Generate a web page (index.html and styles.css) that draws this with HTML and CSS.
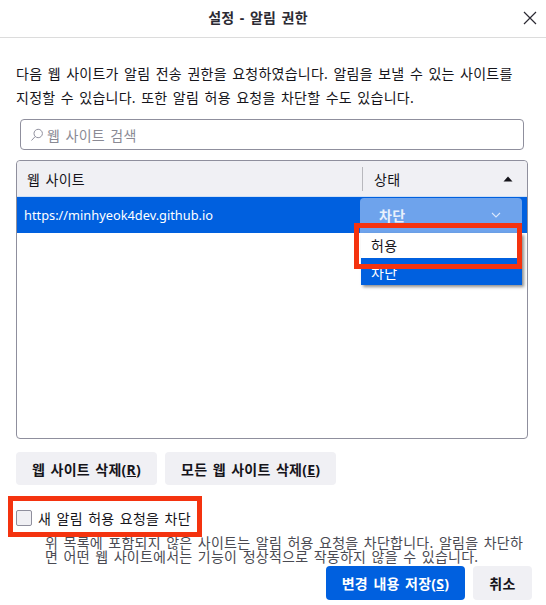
FILE: index.html
```html
<!DOCTYPE html>
<html lang="ko">
  <head>
    <meta charset="UTF-8" />
    <title>설정 - 알림 권한</title>
    <link rel="stylesheet" href="styles.css">
  </head>
  <body>
    <div class="dialog">
      <!-- Title bar -->
      <div class="titlebar">
        <h1>설정 - 알림 권한</h1>
        <svg class="close" width="14" height="14" viewBox="0 0 14 14">
          <path d="M1 1 L13 13 M13 1 L1 13" stroke="#2b2a33" stroke-width="1.2" fill="none" />
        </svg>
      </div>

      <div class="content">
        <p class="intro">다음 웹 사이트가 알림 전송 권한을 요청하였습니다. 알림을 보낼 수 있는 사이트를<br>지정할 수 있습니다. 또한 알림 허용 요청을 차단할 수도 있습니다.</p>

        <div class="search">
          <svg width="14" height="14" viewBox="0 0 14 14">
            <circle cx="8.2" cy="5.5" r="4.2" stroke="#8f8f9d" stroke-width="1" fill="none" />
            <path d="M5.2 8.5 L1.5 12.5" stroke="#8f8f9d" stroke-width="1" fill="none" />
          </svg>
          <span>웹 사이트 검색</span>
        </div>

        <!-- Site list -->
        <div class="list">
          <div class="list-head">
            <div class="col-site">웹 사이트</div>
            <div class="col-status">
              <span>상태</span>
              <svg width="10" height="6" viewBox="0 0 10 6"><path d="M5 0.5 L9.5 5.5 L0.5 5.5 Z" fill="#15141a" /></svg>
            </div>
          </div>
          <div class="list-row">
            <div class="site-url">https://minhyeok4dev.github.io</div>
            <div class="status-select">
              <span>차단</span>
              <svg width="10" height="6" viewBox="0 0 10 6"><path d="M1 1 L5 5 L9 1" stroke="#dbe8fb" stroke-width="1.1" fill="none" /></svg>
            </div>
          </div>
          <div class="status-menu">
            <div class="menu-item">허용</div>
            <div class="menu-item current">차단</div>
          </div>
          <div class="mark mark-menu"></div>
        </div>

        <div class="list-actions">
          <button class="btn">웹 사이트 삭제(<u>R</u>)</button>
          <button class="btn">모든 웹 사이트 삭제(<u>E</u>)</button>
        </div>

        <div class="block-row">
          <label class="check-label"><span class="check"></span>새 알림 허용 요청을 차단</label>
          <div class="mark mark-check"></div>
        </div>
        <p class="desc">위 목록에 포함되지 않은 사이트는 알림 허용 요청을 차단합니다. 알림을 차단하<br>면 어떤 웹 사이트에서는 기능이 정상적으로 작동하지 않을 수 있습니다.</p>

        <div class="footer">
          <button class="btn primary">변경 내용 저장(<u>S</u>)</button>
          <button class="btn cancel">취소</button>
        </div>
      </div>
    </div>
  </body>
</html>
```

FILE: styles.css
```css
:root {
  --blue: #0060df;
  --grey-btn: #f0f0f4;
  --red: #f4330f;
  --ink: #15141a;
}

html,
body {
  margin: 0;
  height: 605px;
  overflow: hidden;
  background: white;
}

body {
  font-family: "Noto Sans", "Noto Sans CJK KR", sans-serif;
  font-size: 14px;
  letter-spacing: 0.25px;
  word-spacing: 1.5px;
  color: var(--ink);
}

.titlebar {
  position: relative;
  box-sizing: border-box;
  height: 38px;
  border-bottom: 1px solid #dcdcdc;
  display: flex;
  align-items: center;
  justify-content: center;
  padding: 0 30px 4px 0;
}

.titlebar h1 {
  margin: 0;
  font-size: 14px;
  font-weight: 700;
  color: #2b2a33;
}

.close {
  position: absolute;
  right: 9px;
  top: 11px;
}

.content {
  padding: 0 14px 0 16px;
}

.intro {
  margin: 24px 0 0 0;
  line-height: 24px;
  height: 48px;
  white-space: nowrap;
}

.search {
  margin: 9px 8px 0 4px;
  height: 29px;
  border: 1px solid #8f8f9d;
  border-radius: 4px;
  display: flex;
  align-items: center;
  gap: 3px;
  padding-left: 9px;
  color: #8a8a94;
}

.list {
  position: relative;
  margin: 10px 4px 0 0;
  height: 277px;
  border: 1px solid #8f8f9d;
  border-radius: 4px;
}

.list-head {
  height: 35px;
  background: var(--grey-btn);
  border-radius: 4px 4px 0 0;
  display: flex;
  align-items: center;
  border-bottom: 1px solid #cfe0f6;
}

.col-site {
  width: 345px;
  box-sizing: border-box;
  padding-left: 10px;
}

.col-status {
  flex: 1;
  display: flex;
  align-items: center;
  justify-content: space-between;
  height: 24px;
  border-left: 1px solid #b8b8bd;
  padding: 0 14px 0 11px;
}

.list-row {
  height: 36px;
  background: var(--blue);
  color: white;
  display: flex;
  align-items: center;
  justify-content: space-between;
  padding: 0 5px 0 7px;
}

.site-url {
  font-size: 12.8px;
  letter-spacing: 0;
  word-spacing: 0;
}

.status-select {
  width: 162px;
  height: 35px;
  box-sizing: border-box;
  background: #6ea3ec;
  border-radius: 4px 4px 0 0;
  display: flex;
  align-items: center;
  justify-content: space-between;
  padding: 0 21px 0 19px;
  font-weight: 700;
  color: #e9f1fc;
}

.status-menu {
  position: absolute;
  left: 344px;
  top: 72px;
  width: 161px;
  background: var(--blue);
  box-shadow: 2px 2px 3px rgba(0, 0, 0, 0.45);
}

.menu-item {
  height: 25px;
  line-height: 26px;
  padding-left: 10px;
  background: white;
}

.menu-item.current {
  background: none;
  color: white;
  height: 27px;
  line-height: 30px;
}

.mark {
  position: absolute;
  border: 5px solid var(--red);
  box-sizing: border-box;
}

.mark-menu {
  left: 337px;
  top: 62px;
  width: 168px;
  height: 46px;
}

.list-actions {
  display: flex;
  gap: 8px;
  margin-top: 13px;
}

.btn {
  height: 33px;
  border: none;
  border-radius: 4px;
  background: var(--grey-btn);
  font-family: inherit;
  font-size: 14px;
  letter-spacing: inherit;
  word-spacing: inherit;
  font-weight: 700;
  color: var(--ink);
  padding: 0 16px;
}

.block-row {
  position: relative;
  margin-top: 23px;
  height: 16px;
}

.check-label {
  display: flex;
  align-items: center;
  gap: 6px;
}

.check {
  width: 14px;
  height: 14px;
  border: 1px solid #8f8f9d;
  border-radius: 2px;
  background: var(--grey-btn);
}

.mark-check {
  left: -8px;
  top: -12px;
  width: 194px;
  height: 41px;
}

.desc {
  margin: 12px 0 0 29px;
  line-height: 14px;
  color: #4a4a52;
  white-space: nowrap;
}

.footer {
  display: flex;
  justify-content: flex-end;
  gap: 8px;
  margin-top: 2px;
}

.btn.primary {
  background: var(--blue);
  color: white;
  width: 139px;
  height: 34px;
  padding: 0;
}

.btn.cancel {
  width: 59px;
  height: 34px;
  padding: 0;
}
```
